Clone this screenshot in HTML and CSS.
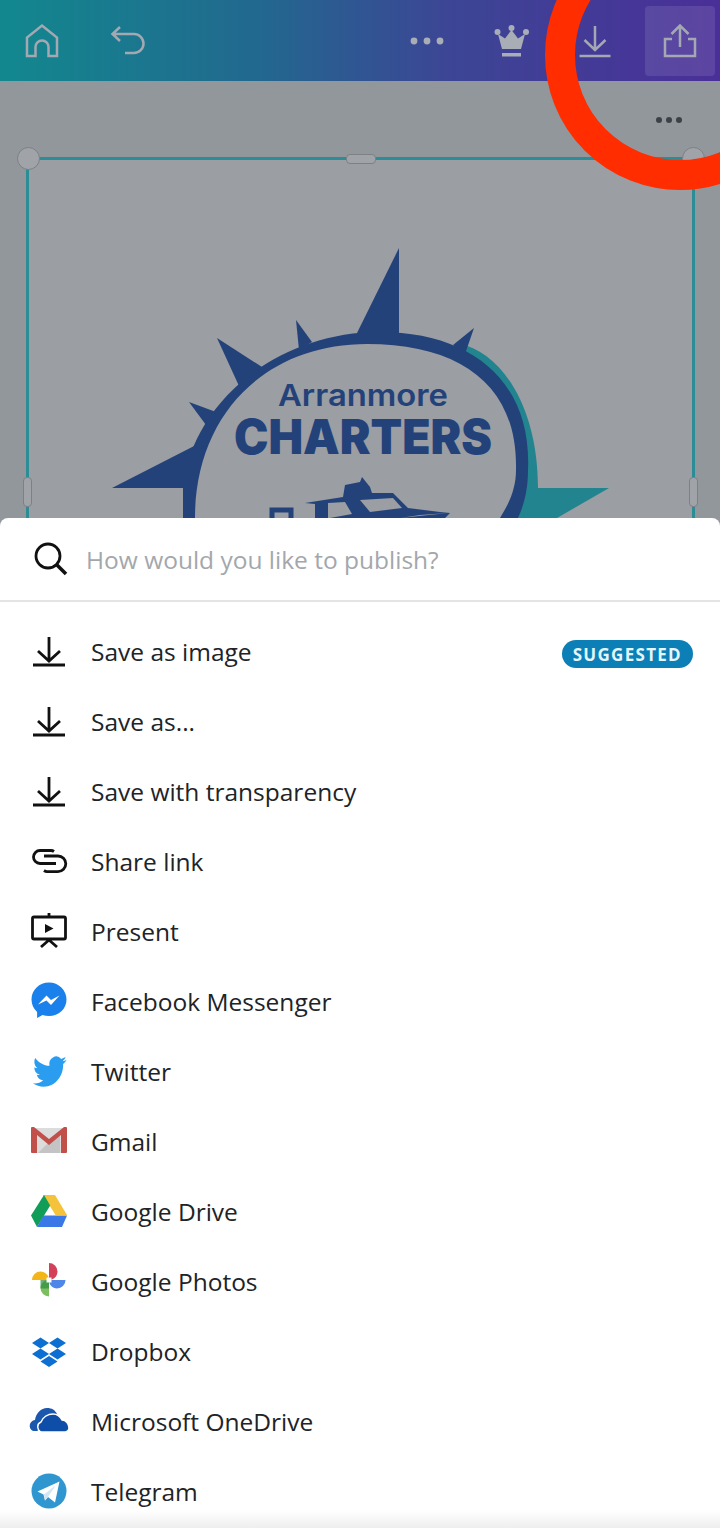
FILE: index.html
```html
<!DOCTYPE html>
<html>
<head>
  <meta http-equiv="content-type" content="text/html; charset=utf-8" />
  <title>Publish</title>
  <link rel="stylesheet" href="styles.css">
</head>
<body>

<div class="editor">
  <div class="topbar">
    <div class="tool">
      <svg width="40" height="40" viewBox="0 0 40 40" class="line"><path d="M5 35V16.500L20 4.500l15 12V35H26.500V26a6.500 6.500 0 0 0-13 0v9z"/></svg>
    </div>
    <div class="tool">
      <svg width="40" height="40" viewBox="0 0 40 40" class="line"><path d="M13 6L5.500 13l7.500 7M6 13h21a8 8 0 0 1 0 19h-9"/></svg>
    </div>
    <div class="spacer"></div>
    <div class="tool">
      <svg width="40" height="40" viewBox="0 0 40 40" class="dots"><circle cx="9" cy="20" r="3.400"/><circle cx="22" cy="20" r="3.400"/><circle cx="35" cy="20" r="3.400"/></svg>
    </div>
    <div class="tool">
      <svg width="40" height="40" viewBox="0 0 40 40" class="dots"><path d="M12 28L8 13l7 4.500L21.500 9l6.500 8.500 7-4.500-4 15z"/><circle cx="7.500" cy="11" r="3"/><circle cx="21.500" cy="7" r="3"/><circle cx="36" cy="11" r="3"/><rect x="12" y="32" width="19" height="3.500"/></svg>
    </div>
    <div class="tool">
      <svg width="40" height="40" viewBox="0 0 40 40" class="line"><path d="M20 5v24M9.500 19L20 29l10.500-10M4.500 35h31"/></svg>
    </div>
    <div class="tool tool-on">
      <svg width="40" height="40" viewBox="0 0 40 40" class="line"><path d="M20 26V5M11.500 13L20 4.500l8.500 8.500M12 18H5v17h30V18h-7"/></svg>
    </div>
  </div>

  <div class="stage">
    <div class="stage-menu"><span></span><span></span><span></span></div>
    <div class="frame">
      <svg class="logo" viewBox="29 160 663 358" width="663" height="358">
        <path class="teal" d="M460 344C500 352 538 405 538 488H609L557 518H450z"/>
        <path class="navy" d="M183 518V488C190 410 270 332 380 332C470 332 532 380 528 470C528 490 524 505 518 518z"/>
        <path class="gap" d="M195 518C195 415 265 344 367 344C460 344 518 385 516 470C516 490 508 505 500 518z"/>
        <path class="navy" d="M399 248V335H356z"/>
        <path class="navy" d="M296 320L312 342 299 350z"/>
        <path class="navy" d="M217 338L262 367 239 386z"/>
        <path class="navy" d="M189 402L216 412 206 425z"/>
        <path class="navy" d="M474 328L453 345 465 354z"/>
        <path class="navy" d="M112 488L198 444 196 480 183 488z"/>
        <text class="logo-small" x="278" y="406" textLength="170" lengthAdjust="spacingAndGlyphs">Arranmore</text>
        <text class="logo-big" x="234" y="454" textLength="258" lengthAdjust="spacingAndGlyphs">CHARTERS</text>
        <path class="navy" d="M305 503L343 497 345 485 360 482 362 477 370 487 372 493 393 493 408 508 440 512 450 513 445 518H315V504z"/>
        <path class="gap" d="M360 500L393 498 402 508 370 512z"/>
        <path class="gap" d="M328 503L345 502 352 514 330 518H328z"/>
        <path class="gap" d="M420 515L448 513 400 518z"/>
        <path class="hollow" d="M272 520V510H291V520"/>
      </svg>
      <span class="handle handle-tl"></span>
      <span class="handle handle-tr"></span>
      <span class="grip grip-top"></span>
      <span class="grip grip-left"></span>
      <span class="grip grip-right"></span>
    </div>
  </div>

  <div class="annotation"></div>
</div>

<div class="sheet">
  <div class="search">
    <svg width="36" height="36" viewBox="0 0 36 36" class="ink"><circle cx="15" cy="15" r="12"/><path d="M24 24l9 9" stroke-width="3.500"/></svg>
    <span>How would you like to publish?</span>
  </div>

  <ul class="list">
    <li>
      <svg width="40" height="40" viewBox="0 0 40 40" class="ink"><path d="M20 5v24M9 19l11 10 11-10M4 33h32"/></svg>
      <span>Save as image</span>
      <em class="badge">SUGGESTED</em>
    </li>
    <li>
      <svg width="40" height="40" viewBox="0 0 40 40" class="ink"><path d="M20 5v24M9 19l11 10 11-10M4 33h32"/></svg>
      <span>Save as...</span>
    </li>
    <li>
      <svg width="40" height="40" viewBox="0 0 40 40" class="ink"><path d="M20 5v24M9 19l11 10 11-10M4 33h32"/></svg>
      <span>Save with transparency</span>
    </li>
    <li>
      <svg width="40" height="40" viewBox="0 0 40 40" class="ink"><path d="M25 9.500C24 8.800 23 8.500 22 8.500H11a6.500 6.500 0 0 0 0 13H27"/><path d="M15 14H29a7.800 7.800 0 0 1 0 15.600H18C17 29.600 16 29.200 15 28.500"/></svg>
      <span>Share link</span>
    </li>
    <li>
      <svg width="40" height="40" viewBox="0 0 40 40" class="ink"><path d="M20 1v4M5 5h30a1.500 1.500 0 0 1 1.500 1.500v19a1.500 1.500 0 0 1-1.500 1.500H5a1.500 1.500 0 0 1-1.500-1.500V6.500A1.500 1.500 0 0 1 5 5zM20 28l-8 7M20 28l8 7"/><path class="solid" d="M16 12l8.500 4.500L16 21z"/></svg>
      <span>Present</span>
    </li>
    <li>
      <svg width="40" height="40" viewBox="0 0 40 40"><path fill="#1a80ec" d="M20 .500C10.300.500 2.500 8 2.500 17.500c0 5 2.100 9.300 5.600 12.400V36l5.400-3c2 .7 4.200 1.100 6.500 1.100 9.700 0 17.500-7.200 17.500-16.600S29.700.500 20 .500z"/><path fill="#fff" d="M9 22.500l8.500-9 4.500 4.500 8.500-4.500-8.500 9.500-4.500-4.500z"/></svg>
      <span>Facebook Messenger</span>
    </li>
    <li>
      <svg width="40" height="40" viewBox="0 0 40 40"><path fill="#2a9df0" transform="translate(4 1) scale(1.400 1.550)" d="M23.953 4.570a10 10 0 0 1-2.825.775 4.958 4.958 0 0 0 2.163-2.723c-.951.555-2.005.959-3.127 1.184a4.920 4.920 0 0 0-8.384 4.482C7.690 8.095 4.067 6.130 1.640 3.162a4.822 4.822 0 0 0-.666 2.475c0 1.710.870 3.213 2.188 4.096a4.904 4.904 0 0 1-2.228-.616v.060a4.923 4.923 0 0 0 3.946 4.827 4.996 4.996 0 0 1-2.212.085 4.936 4.936 0 0 0 4.604 3.417 9.867 9.867 0 0 1-6.102 2.105c-.390 0-.779-.023-1.170-.067a13.995 13.995 0 0 0 7.557 2.209c9.053 0 13.998-7.496 13.998-13.985 0-.210 0-.420-.015-.630A9.935 9.935 0 0 0 24 4.590z"/></svg>
      <span>Twitter</span>
    </li>
    <li>
      <svg width="40" height="40" viewBox="0 0 40 40"><path fill="#dcdcdc" d="M3 6h34v25H3z"/><path fill="#c4c4c4" d="M9 31l11-11 11-11v22z"/><path fill="#c2504a" d="M3 5h2l15 12L35 5h2a1 1 0 0 1 1 1v24a1 1 0 0 1-1 1h-5V13L20 23 8 13v18H3a1 1 0 0 1-1-1V6a1 1 0 0 1 1-1z"/></svg>
      <span>Gmail</span>
    </li>
    <li>
      <svg width="40" height="40" viewBox="0 0 40 40"><path fill="#f5c33b" d="M14 3h12l12 20H26.500z"/><path fill="#0f9d58" d="M15 3l6.200 10.500L8 35l-6-11.500z"/><path fill="#3b78e7" d="M14.500 23.500H38L33 35H8z"/></svg>
      <span>Google Drive</span>
    </li>
    <li>
      <svg width="40" height="40" viewBox="0 0 40 40">
        <path fill="#f4b518" d="M3 18a8.500 8.500 0 0 1 8.500-8.500c4.700 0 8.500 3.800 8.500 8.500z"/>
        <path fill="#d3405a" d="M20 1a8.500 8.500 0 0 1 8.500 8.500c0 4.700-3.800 8.500-8.500 8.500z"/>
        <path fill="#4f86e8" d="M36.500 18a8.500 8.500 0 0 1-8.500 8.500c-4.700 0-8-3.800-8-8.500z"/>
        <path fill="#7cbf5f" d="M20 34.500a8.500 8.500 0 0 1-8.500-8.500c0-4.700 3.800-8 8.500-8z"/>
        <path fill="#2f8f3f" d="M11.500 18H20v8.500h-8.500z" opacity=".7"/>
        <path fill="#fff" d="M17.500 15.500h5v5h-5z"/>
      </svg>
      <span>Google Photos</span>
    </li>
    <li>
      <svg width="40" height="40" viewBox="0 0 40 40" fill="#0d6fd1"><path d="M11.500 5.500l8.500 5.500-8.500 5.500L3 11z"/><path d="M28.500 5.500L37 11l-8.500 5.500L20 11z"/><path d="M11.500 16.500L20 22l-8.500 5.500L3 22z"/><path d="M28.500 16.500L37 22l-8.500 5.500L20 22z"/><path d="M20 24l8.500 5.500L20 35l-8.500-5.500z"/></svg>
      <span>Dropbox</span>
    </li>
    <li>
      <svg width="40" height="40" viewBox="0 0 40 40"><path fill="#1a57ad" d="M6 29C-1 29-1 19 6 18 7 11 12 6 18 6 23 6 26 8 28 12L30 16 8 29z"/><path fill="#0f4ea8" stroke="#fff" stroke-width="1.500" d="M14 30C8 30 7 22 12 20 14 15 19 12 24 12 28 12 31 14 33 18 37 18 40 22 40 26 40 28 38 30 36 30z"/></svg>
      <span>Microsoft OneDrive</span>
    </li>
    <li>
      <svg width="40" height="40" viewBox="0 0 40 40"><circle cx="20" cy="19" r="17.500" fill="#3096cf"/><path fill="#fff" d="M8.500 19.500L30.500 9.500l-4.500 21-7-5.500-3 3.500-1.500-6z"/><path fill="#cfe6f3" d="M15 22.500L26.500 13.500 19 25l-3 3.500z"/></svg>
      <span>Telegram</span>
    </li>
  </ul>
  <div class="sheet-fade"></div>
</div>

</body>
</html>
```

FILE: styles.css
```css
* {
    box-sizing: border-box;
}
html, body {
    margin: 0;
    padding: 0;
}
body {
    width: 720px;
    height: 1528px;
    overflow: hidden;
    background: #92979c;
    font-family: "Open Sans", "Liberation Sans", sans-serif;
}

/* editor behind the sheet */
.editor {
    position: relative;
    height: 518px;
    overflow: hidden;
}
.topbar {
    display: flex;
    align-items: center;
    gap: 15px;
    height: 81px;
    padding: 0 5px 0 7px;
    background: linear-gradient(90deg, #12888e 0%, #22688f 36%, #3c4695 62%, #4a2f98 100%);
}
.spacer {
    flex: 1;
}
.tool {
    display: flex;
    align-items: center;
    justify-content: center;
    width: 70px;
    height: 70px;
    border-radius: 4px;
}
.tool-on {
    background: rgba(255, 255, 255, 0.1);
}
.line {
    fill: none;
    stroke: #a3a8b2;
    stroke-width: 2.5;
}
.dots {
    fill: #a9adb6;
}

.stage {
    padding-left: 26px;
}
.stage-menu {
    display: flex;
    justify-content: flex-end;
    align-items: center;
    gap: 4px;
    height: 76px;
    padding: 2px 38px 0 0;
}
.stage-menu span {
    width: 6px;
    height: 6px;
    border-radius: 50%;
    background: #3c4147;
}
.frame {
    position: relative;
    width: 669px;
    height: 420px;
    border: solid #2d8d97;
    border-width: 3px 3px 0 3px;
    background: #9b9ea3;
}
.logo {
    display: block;
}
.navy {
    fill: #24427a;
}
.teal {
    fill: #22848f;
}
.gap {
    fill: #9b9ea3;
}
.hollow {
    fill: none;
    stroke: #24427a;
    stroke-width: 5;
}
.logo-small {
    font-family: Inter, "Open Sans", sans-serif;
    font-weight: 600;
    font-size: 30px;
    fill: #24427a;
}
.logo-big {
    font-family: Inter, "Open Sans", sans-serif;
    font-weight: 900;
    font-size: 48px;
    fill: #24427a;
}
.handle {
    position: absolute;
    top: -13px;
    width: 23px;
    height: 23px;
    border-radius: 50%;
    border: 1px solid #7d8185;
    background: #a0a3a8;
}
.handle-tl {
    left: -12px;
}
.handle-tr {
    right: -13px;
}
.grip {
    position: absolute;
    border: 1px solid #7d8185;
    border-radius: 4px;
    background: #a0a3a8;
}
.grip-top {
    top: -6px;
    left: 317px;
    width: 30px;
    height: 10px;
}
.grip-left, .grip-right {
    top: 317px;
    width: 9px;
    height: 30px;
}
.grip-left {
    left: -6px;
}
.grip-right {
    right: -6px;
}
/* red circle someone drew on the screenshot */
.annotation {
    position: absolute;
    left: 545px;
    top: -80px;
    width: 270px;
    height: 270px;
    border: 30px solid #ff2d00;
    border-radius: 50%;
}

/* publish sheet */
.sheet {
    position: relative;
    height: 1010px;
    overflow: hidden;
    background: #fff;
    border-radius: 8px 8px 0 0;
    color: #202327;
}
.search {
    display: flex;
    align-items: center;
    gap: 17px;
    height: 84px;
    padding: 0 0 0 33px;
    border-bottom: 2px solid #e3e4e5;
    color: #a3a7ac;
    font-size: 24.5px;
}
.ink {
    flex: none;
    fill: none;
    stroke: #111;
    stroke-width: 2.8;
}
.ink .solid {
    fill: #111;
    stroke: none;
}
.list {
    list-style: none;
    margin: 0;
    padding: 15px 27px 0 29px;
}
.list li {
    display: flex;
    align-items: center;
    gap: 22px;
    height: 70px;
    font-size: 24.5px;
}
.list li svg {
    flex: none;
}
.list li span {
    margin-bottom: 2px;
}
.badge {
    margin: 4px 0 0 auto;
    padding: 0 11px;
    height: 28px;
    line-height: 29px;
    border-radius: 14px;
    background: #0b7fb6;
    color: #e2f6fb;
    font-style: normal;
    font-weight: 700;
    font-size: 17px;
    letter-spacing: 1.3px;
}
.sheet-fade {
    position: absolute;
    left: 0;
    right: 0;
    bottom: 0;
    height: 18px;
    background: linear-gradient(rgba(240, 240, 240, 0), #eeeeee);
}
```
